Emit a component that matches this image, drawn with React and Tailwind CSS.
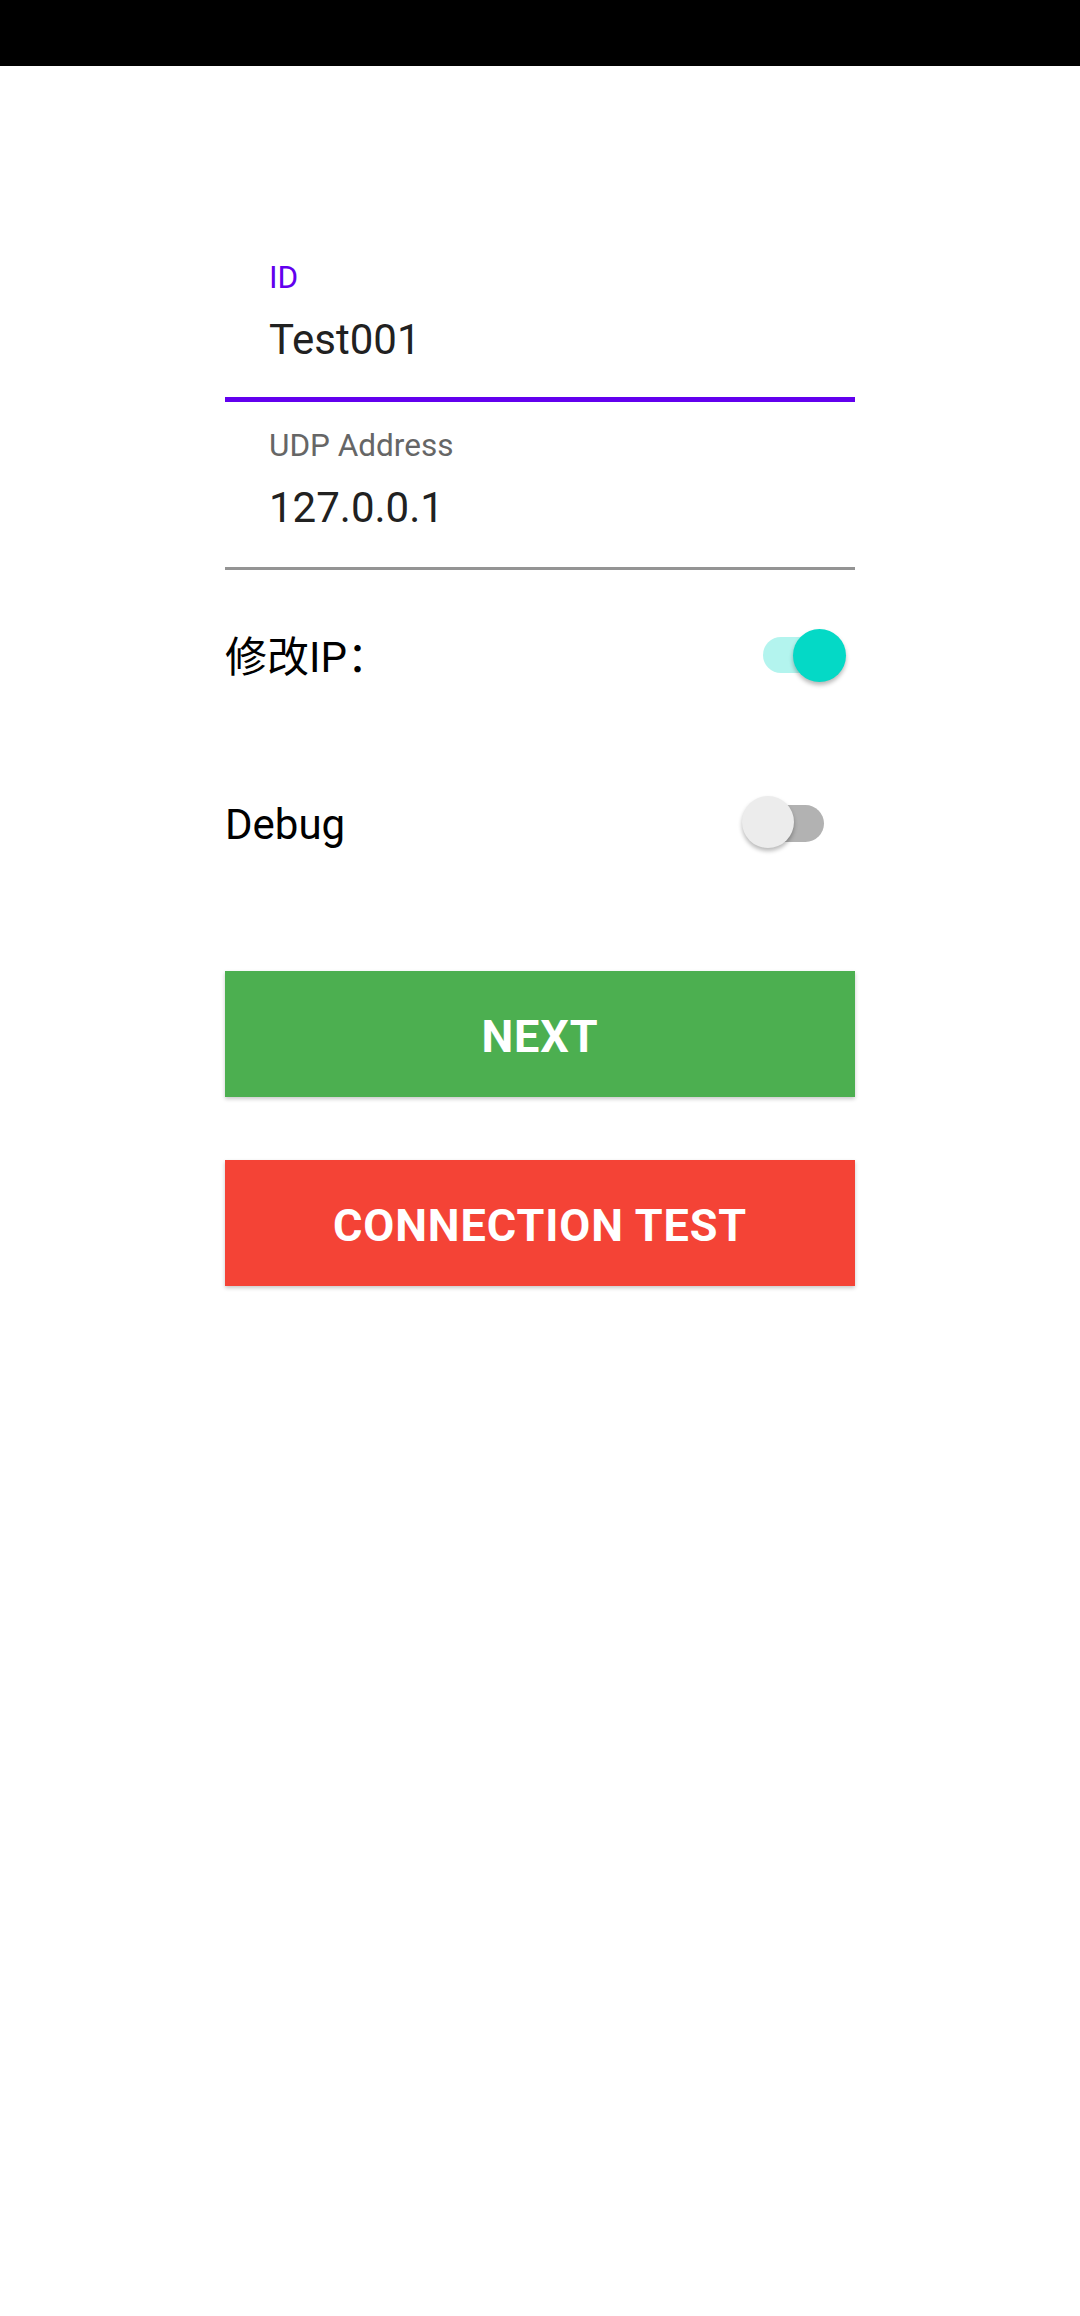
import React, { useState } from 'react';

const FONT = "font-['Roboto','Noto_Sans_CJK_SC',sans-serif]";

const Field = ({ label, value, focused }) => (
  <div
    className={`h-[168px] pl-[44px] pt-[28px] ${
      focused ? 'border-b-[5px] border-[#6200ee]' : 'border-b-[3px] border-[#949494]'
    }`}
  >
    <div className={`h-[32px] text-[31.5px] leading-[32px] ${focused ? 'text-[#6200ee]' : 'text-[#666666]'}`}>
      {label}
    </div>
    <div className="mt-[25px] h-[42px] text-[42px] leading-[42px] text-[#212121]">{value}</div>
  </div>
);

const SwitchOn = () => (
  <div className="relative mr-[9px] h-[53px] w-[83px]">
    <div className="absolute left-0 top-[8px] h-[36px] w-[70px] rounded-full bg-[#b3f4ee]" />
    <div className="absolute right-0 top-0 h-[53px] w-[53px] rounded-full bg-[#04d9c6] shadow-[0_3px_4px_rgba(0,0,0,0.28)]" />
  </div>
);

const SwitchOff = () => (
  <div className="relative mr-[31px] h-[53px] w-[82px]">
    <div className="absolute right-0 top-[9px] h-[37px] w-[72px] rounded-full bg-[#b2b2b2]" />
    <div className="absolute left-0 top-0 h-[52px] w-[52px] rounded-full bg-[#ececec] shadow-[0_3px_4px_rgba(0,0,0,0.28)]" />
  </div>
);

const App = () => {
  const [ip] = useState('127.0.0.1');

  return (
    <div className={`h-[2316px] w-full bg-white ${FONT}`}>
      {/* status bar */}
      <div className="h-[66px] w-full bg-black" />

      <div className="mx-auto w-[630px] pt-[168px]">
        <Field label="ID" value="Test001" focused />
        <Field label="UDP Address" value={ip} />

        <div className="mt-[22px] flex h-[126px] items-center justify-between">
          <span className="pt-[6px] text-[42px] leading-[42px] text-black">修改IP：</span>
          <SwitchOn />
        </div>

        <div className="mt-[41px] flex h-[126px] items-center justify-between">
          <span className="pt-[6px] text-[42px] leading-[42px] text-black">Debug</span>
          <SwitchOff />
        </div>

        <button className="mt-[86px] flex h-[126px] w-full items-center justify-center bg-[#4caf50] pt-[5px] text-[45px] font-bold uppercase tracking-[0.02em] text-white shadow-[0_2px_4px_rgba(0,0,0,0.22)]">
          Next
        </button>

        <button className="mt-[63px] flex h-[126px] w-full items-center justify-center bg-[#f44336] pt-[5px] text-[45px] font-bold uppercase tracking-[0.02em] text-white shadow-[0_2px_4px_rgba(0,0,0,0.22)]">
          Connection Test
        </button>
      </div>
    </div>
  );
};

export default App;
